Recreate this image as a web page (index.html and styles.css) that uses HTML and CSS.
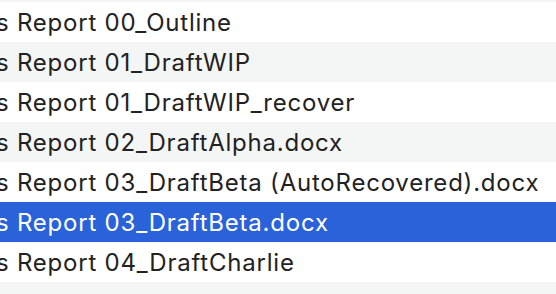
FILE: index.html
```html
<!DOCTYPE html>
<html lang="en">
<head>
  <meta charset="UTF-8">
  <link rel="stylesheet" href="styles.css">
</head>
<body>
  <div class="list">
    <div class="row alt stub"></div>
    <div class="row"><span class="name">s Report 00_Outline</span></div>
    <div class="row alt"><span class="name">s Report 01_DraftWIP</span></div>
    <div class="row"><span class="name">s Report 01_DraftWIP_recover</span></div>
    <div class="row alt"><span class="name">s Report 02_DraftAlpha.docx</span></div>
    <div class="row"><span class="name">s Report 03_DraftBeta (AutoRecovered).docx</span></div>
    <div class="row selected"><span class="name">s Report 03_DraftBeta.docx</span></div>
    <div class="row"><span class="name">s Report 04_DraftCharlie</span></div>
    <div class="row alt end"></div>
  </div>
</body>
</html>
```

FILE: styles.css
```css
* { box-sizing: border-box; }
body { margin: 0; background: #fff; overflow: hidden; height: 294px; }
.list { display: flex; flex-direction: column; }
.row {
  height: 40px;
  flex-shrink: 0;
  display: flex;
  align-items: center;
  background: #fff;
  color: #222;
  font-family: Inter, "Noto Sans", sans-serif;
  font-size: 24px;
  letter-spacing: 0.78px;
  white-space: nowrap;
}
.row.stub { height: 2px; }
.row.end { height: 12px; }
.row.alt { background: #f4f5f5; }
.row.selected { background: #2962d9; color: #fff; }
.name { margin-left: -4px; padding-top: 1px; }
```
